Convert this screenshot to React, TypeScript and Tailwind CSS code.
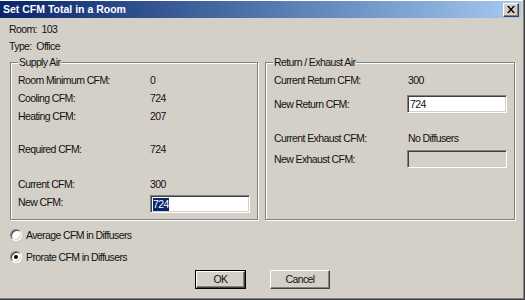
import React from "react";

const Row = ({ label, value, labelW }: { label: string; value: string; labelW: string }) => (
  <div className="flex h-[18px] items-center">
    <div className={labelW}>{label}</div>
    <div>{value}</div>
  </div>
);

const Input = ({ children, disabled }: { children?: React.ReactNode; disabled?: boolean }) => (
  <div
    className={`flex h-[18px] items-center border border-t-[#808080] border-l-[#808080] border-b-white border-r-white pl-[2px] shadow-[inset_1px_1px_0_#404040,inset_-1px_-1px_0_#d4d0c8] ${
      disabled ? "bg-[#d4d0c8]" : "bg-white"
    }`}
  >
    {children}
  </div>
);

const Radio = ({ checked, label }: { checked?: boolean; label: string }) => (
  <div className="flex h-[16px] items-center gap-[4px]">
    <div className="flex h-[12px] w-[12px] items-center justify-center rounded-full border border-t-[#808080] border-l-[#808080] border-b-white border-r-white bg-white shadow-[inset_1px_1px_0_#404040,inset_-1px_-1px_0_#d4d0c8]">
      {checked && <div className="h-[4px] w-[4px] rounded-full bg-black" />}
    </div>
    <span>{label}</span>
  </div>
);

const Button = ({ label, w, def }: { label: string; w: string; def?: boolean }) => (
  <div className={`${w} h-[19px] ${def ? "border border-black" : ""}`}>
    <div className="flex h-full w-full items-center justify-center border border-t-white border-l-white border-b-[#404040] border-r-[#404040] bg-[#d4d0c8] shadow-[inset_-1px_-1px_0_#808080]">
      {label}
    </div>
  </div>
);

export default function App() {
  return (
    <div className="h-[300px] w-[525px] overflow-hidden bg-[#404040]">
      <div className="h-[299px] w-[524px] bg-[#808080]">
        <div className="flex h-[298px] w-[523px] flex-col bg-[#d4d0c8] text-[10.5px] leading-[13px] tracking-[-0.6px] text-[#111] font-[family-name:'Liberation_Sans',sans-serif] shadow-[inset_0_1px_0_#ffffff]">
          {/* title bar */}
          <div className="mt-[1px] flex h-[17px] w-[521px] items-center justify-between bg-gradient-to-r from-[#0a246a] to-[#a6caf0] pl-[3px] pr-[2px]">
            <span className="font-bold text-white text-[10.5px] tracking-[0px]">
              Set CFM Total in a Room
            </span>
            <div className="flex h-[14px] w-[16px] items-center justify-center border border-t-white border-l-white border-b-[#404040] border-r-[#404040] bg-[#d4d0c8] shadow-[inset_-1px_-1px_0_#808080]">
              <svg width="8" height="7" viewBox="0 0 8 7">
                <path d="M0 0h2l2 2.5L6 0h2L5 3.5 8 7H6L4 4.5 2 7H0l3-3.5z" fill="#000" />
              </svg>
            </div>
          </div>

          <div className="mt-[5px] pl-[9px]">Room:&nbsp; 103</div>
          <div className="mt-[4px] pl-[9px]">Type:&nbsp; Office</div>

          <div className="mt-[9px] flex gap-[7px] pl-[10px]">
            {/* Supply Air */}
            <div className="relative h-[158px] w-[248px] border border-[#808080] shadow-[1px_1px_0_#ffffff,inset_1px_1px_0_#ffffff] pl-[7px] pt-[8px]">
              <span className="absolute left-[7px] top-[-7px] bg-[#d4d0c8] px-[1px]">Supply Air</span>
              <Row label="Room Minimum CFM:" value="0" labelW="w-[132px]" />
              <Row label="Cooling CFM:" value="724" labelW="w-[132px]" />
              <Row label="Heating CFM:" value="207" labelW="w-[132px]" />
              <div className="mt-[15px]">
                <Row label="Required CFM:" value="724" labelW="w-[132px]" />
              </div>
              <div className="mt-[17px]">
                <Row label="Current CFM:" value="300" labelW="w-[132px]" />
              </div>
              <div className="mt-[2px] flex">
                <div className="w-[132px] pt-[1px]">New CFM:</div>
                <div className="w-[100px]">
                  <Input>
                    <span className="bg-[#0a246a] text-white">724</span>
                  </Input>
                </div>
              </div>
            </div>

            {/* Return / Exhaust Air */}
            <div className="relative h-[158px] w-[250px] border border-[#808080] shadow-[1px_1px_0_#ffffff,inset_1px_1px_0_#ffffff] pl-[8px] pt-[8px]">
              <span className="absolute left-[7px] top-[-7px] bg-[#d4d0c8] px-[1px]">Return / Exhaust Air</span>
              <div className="flex h-[18px] items-center">
                <div className="w-[134px]">Current Return CFM:</div>
                <div>300</div>
              </div>
              <div className="mt-[6px] flex items-center">
                <div className="w-[133px]">New Return CFM:</div>
                <div className="w-[100px]">
                  <Input>724</Input>
                </div>
              </div>
              <div className="mt-[16px] flex h-[18px] items-center">
                <div className="w-[134px]">Current Exhaust CFM:</div>
                <div>No Diffusers</div>
              </div>
              <div className="mt-[3px] flex items-center">
                <div className="w-[133px]">New Exhaust CFM:</div>
                <div className="w-[100px]">
                  <Input disabled />
                </div>
              </div>
            </div>
          </div>

          <div className="mt-[7px] pl-[10px]">
            <Radio label="Average CFM in Diffusers" />
          </div>
          <div className="mt-[6px] pl-[10px]">
            <Radio checked label="Prorate CFM in Diffusers" />
          </div>

          <div className="mt-[5px] flex gap-[24px] pl-[195px]">
            <Button label="OK" w="w-[51px]" def />
            <Button label="Cancel" w="w-[60px]" />
          </div>
        </div>
      </div>
    </div>
  );
}
